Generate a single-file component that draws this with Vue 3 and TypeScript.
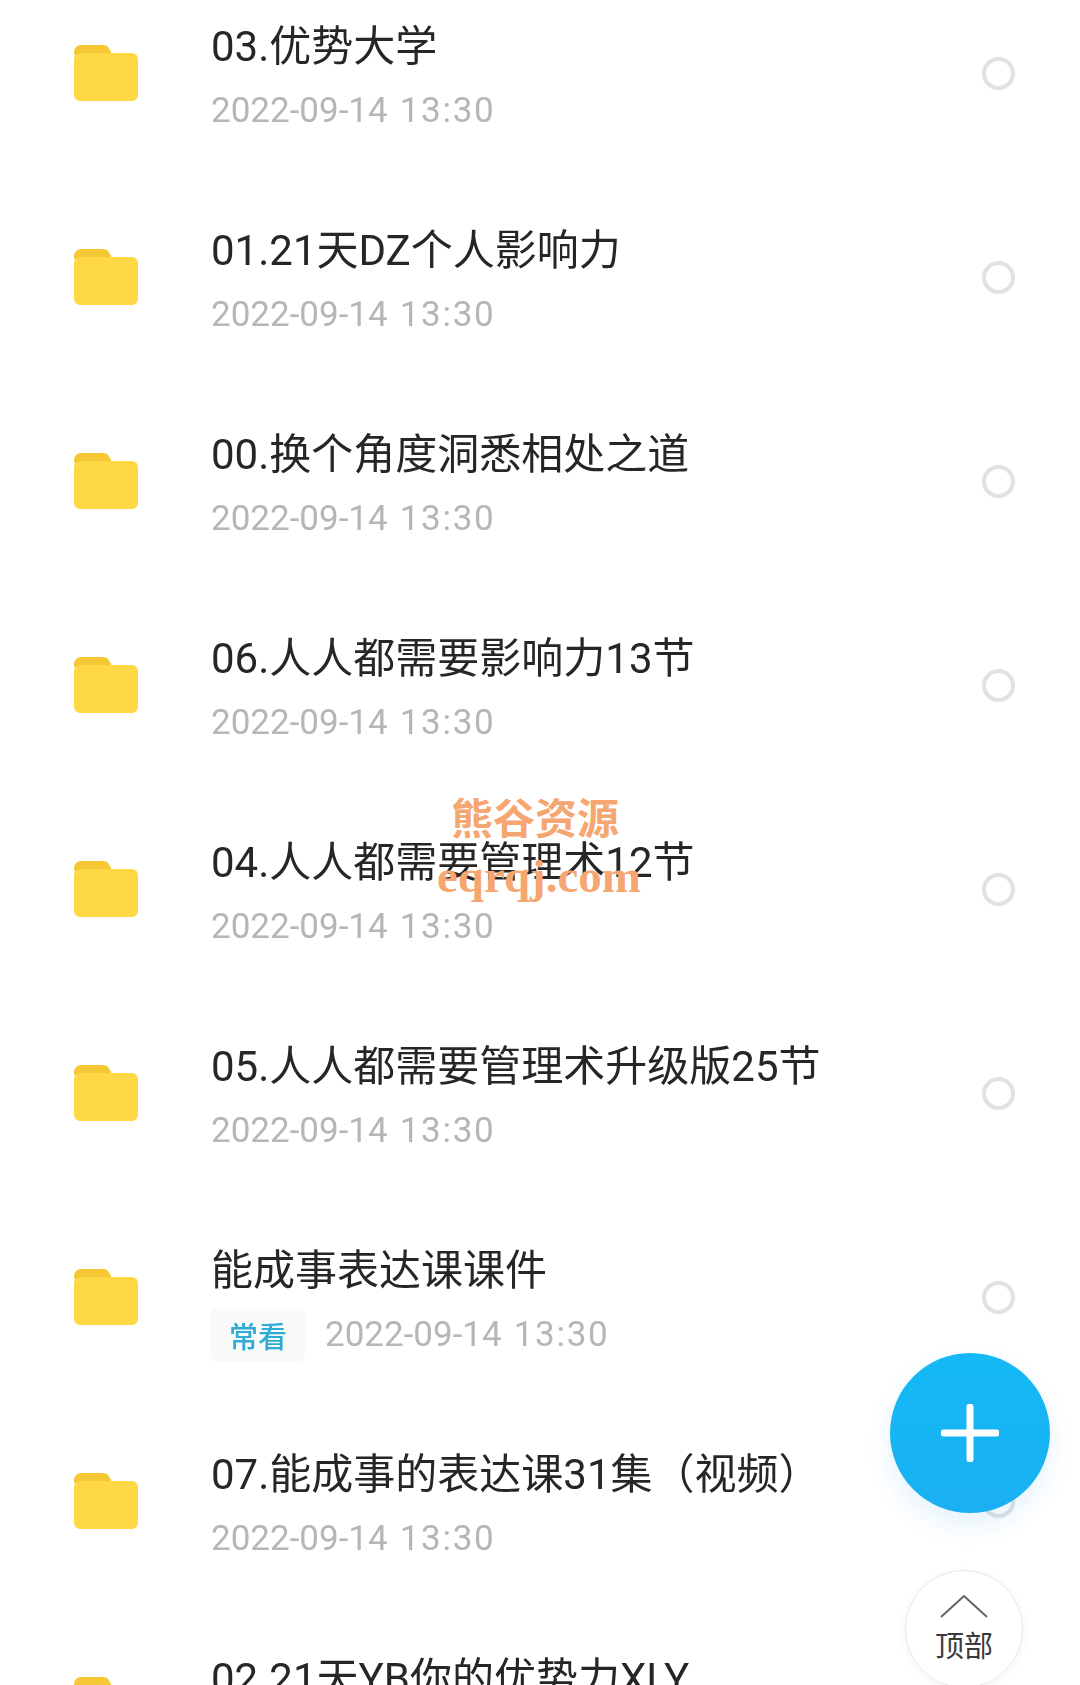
<script setup lang="ts">
interface Folder {
  name: string
  tag?: string
}

const folders: Folder[] = [
  { name: '03.优势大学' },
  { name: '01.21天DZ个人影响力' },
  { name: '00.换个角度洞悉相处之道' },
  { name: '06.人人都需要影响力13节' },
  { name: '04.人人都需要管理术12节' },
  { name: '05.人人都需要管理术升级版25节' },
  { name: '能成事表达课课件', tag: '常看' },
  { name: '07.能成事的表达课31集（视频）' },
  { name: '02.21天YB你的优势力XLY' },
]
</script>

<template>
  <div class="page">
    <ul class="list">
      <li v-for="item in folders" :key="item.name" class="row">
        <svg class="folder" viewBox="0 0 64 56" aria-hidden="true">
          <path d="M0 7a7 7 0 0 1 7-7h22c5 0 6 3 8 7l1 3H0z" fill="#f6c836" />
          <path d="M0 14a6 6 0 0 1 6-6h52a6 6 0 0 1 6 6v36a6 6 0 0 1-6 6H6a6 6 0 0 1-6-6z" fill="#ffd945" />
        </svg>
        <div class="info">
          <div class="name">{{ item.name }}</div>
          <div class="meta">
            <span v-if="item.tag" class="tag">{{ item.tag }}</span>
            <span class="date">2022-09-14</span>
            <span class="time">13:30</span>
          </div>
        </div>
        <span class="radio"></span>
      </li>
    </ul>

    <div class="watermark">
      <div class="wm-cn">熊谷资源</div>
      <div class="wm-en">eqrqj.com</div>
    </div>

    <button class="fab" aria-label="新建">
      <svg viewBox="0 0 58 58" width="58" height="58" aria-hidden="true">
        <path d="M29 3v52M3 29h52" stroke="#fff" stroke-width="7" stroke-linecap="round" fill="none" />
      </svg>
    </button>

    <button class="to-top">
      <svg viewBox="0 0 48 23" width="48" height="23" aria-hidden="true">
        <path d="M1 22L24 1l23 21" stroke="#666" stroke-width="2" fill="none" />
      </svg>
      <span>顶部</span>
    </button>
  </div>
</template>

<style>
html,
body {
  margin: 0;
  background: #fff;
}
</style>

<style scoped>
.page {
  position: relative;
  width: 1080px;
  height: 1685px;
  overflow: hidden;
  background: #fff;
  font-family: Roboto, "Noto Sans CJK SC", sans-serif;
}

.list {
  list-style: none;
  margin: -29px 0 0;
  padding: 0;
  filter: blur(0.6px);
}

.row {
  display: flex;
  align-items: center;
  height: 204px;
  padding: 0 65px 0 74px;
  box-sizing: border-box;
}

.folder {
  width: 64px;
  height: 56px;
  flex: none;
  margin-top: -1px;
}

.info {
  flex: 1;
  margin-left: 73px;
  margin-top: 10px;
}

.name {
  font-size: 42px;
  line-height: 56px;
  color: #262626;
  white-space: nowrap;
}

.meta {
  display: flex;
  align-items: center;
  height: 54px;
  margin-top: 9px;
}

.tag {
  display: flex;
  align-items: center;
  justify-content: center;
  width: 94px;
  height: 54px;
  margin-right: 20px;
  border-radius: 6px;
  background: #f9fafa;
  color: #2fabd6;
  font-size: 29px;
  font-weight: 500;
}

.date,
.time {
  font-size: 35px;
  color: #b6b6b6;
}

.time {
  margin-left: 12px;
  letter-spacing: 1.7px;
}

.radio {
  flex: none;
  width: 33px;
  height: 33px;
  box-sizing: border-box;
  border: 4px solid #e2e2e2;
  border-radius: 50%;
}

.watermark {
  position: absolute;
  left: 432px;
  top: 790px;
  width: 214px;
  text-align: center;
  color: #f5a671;
  pointer-events: none;
}

.wm-cn {
  font-size: 42px;
  line-height: 52px;
  font-weight: 700;
  font-family: "Noto Sans CJK SC", sans-serif;
  margin-right: 8px;
}

.wm-en {
  font-size: 47px;
  line-height: 50px;
  margin-top: 9px;
  font-weight: 700;
  font-family: "Liberation Serif", serif;
  white-space: nowrap;
}

.fab {
  position: absolute;
  left: 890px;
  top: 1353px;
  width: 160px;
  height: 160px;
  display: flex;
  align-items: center;
  justify-content: center;
  padding: 0;
  border: none;
  border-radius: 50%;
  background: linear-gradient(180deg, #14b9f5 0%, #1ab0f2 100%);
  box-shadow: 0 12px 24px rgba(30, 160, 230, 0.12);
}

.to-top {
  position: absolute;
  left: 905px;
  top: 1570px;
  width: 118px;
  height: 118px;
  display: flex;
  flex-direction: column;
  align-items: center;
  padding: 24px 0 0;
  box-sizing: border-box;
  border: 1px solid #e8e8e8;
  border-radius: 50%;
  background: #fff;
  box-shadow: 0 2px 8px rgba(0, 0, 0, 0.05);
  color: #3a3a3a;
  font-family: "Noto Sans CJK SC", sans-serif;
  font-size: 29px;
  line-height: 36px;
}

.to-top span {
  margin-top: 8px;
}
</style>
